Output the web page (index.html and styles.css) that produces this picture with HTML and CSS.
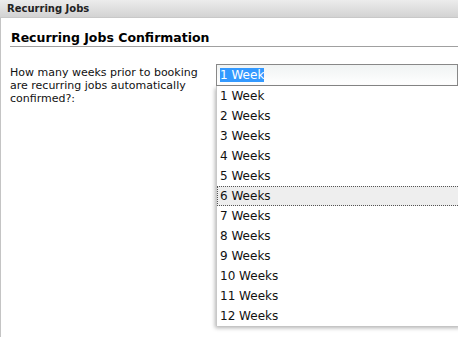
FILE: index.html
```
<!DOCTYPE html>
<html lang="en">
<head>
    <meta charset="UTF-8">
    <title>Recurring Jobs</title>
    <link rel="stylesheet" href="styles.css">
</head>
<body>
    <div class="panel-header">Recurring Jobs</div>
    <div class="panel-body">
        <h2 class="section-title">Recurring Jobs Confirmation</h2>
        <div class="form-row">
            <label class="field-label">How many weeks prior to booking are recurring jobs automatically confirmed?:</label>
            <div class="combo">
                <div class="combo-input"><span class="combo-selected">1 Week</span></div>
                <ul class="combo-list">
                    <li>1 Week</li>
                    <li>2 Weeks</li>
                    <li>3 Weeks</li>
                    <li>4 Weeks</li>
                    <li>5 Weeks</li>
                    <li class="hover">6 Weeks</li>
                    <li>7 Weeks</li>
                    <li>8 Weeks</li>
                    <li>9 Weeks</li>
                    <li>10 Weeks</li>
                    <li>11 Weeks</li>
                    <li>12 Weeks</li>
                </ul>
            </div>
        </div>
    </div>
</body>
</html>
```

FILE: styles.css
```
body {
    margin: 0;
    font-family: "DejaVu Sans", Verdana, sans-serif;
    background: white;
    overflow: hidden;
}
.panel-header {
    height: 18px;
    line-height: 18px;
    padding-left: 7px;
    font-size: 10px;
    font-weight: bold;
    color: #222;
    background: linear-gradient(#ececec, #d3d3d3);
    border-bottom: 1px solid #c8c8c8;
    box-sizing: border-box;
}
.panel-body {
    border-left: 1px solid #c4c4c4;
    height: 319px;
    padding: 0 0 0 9px;
}
.section-title {
    margin: 0;
    padding-top: 12px;
    height: 16px;
    font-size: 12.5px;
    font-weight: bold;
    color: #000;
    border-bottom: 1px solid #a0a0a0;
    line-height: 16px;
    padding-left: 1px;
}
.form-row {
    display: flex;
    margin-top: 17px;
}
.field-label {
    width: 206px;
    font-size: 11px;
    line-height: 13px;
    color: #111;
    padding-top: 2px;
}
.combo {
    position: relative;
    flex: 1;
}
.combo-input {
    height: 22px;
    box-sizing: border-box;
    border: 1px solid #888;
    background: linear-gradient(#f0f3f3, #fff);
    padding: 2px 0 0 3px;
    font-size: 12px;
    line-height: 16px;
}
.combo-selected {
    background: #3399ff;
    color: white;
}
.combo-list {
    position: absolute;
    top: 22px;
    left: 0;
    right: -4px;
    margin: 0;
    padding: 0;
    list-style: none;
    background: white;
    border-left: 1px solid #c8c8c8;
    box-shadow: -1px 2px 4px rgba(0, 0, 0, 0.3);
}
.combo-list li {
    height: 20px;
    line-height: 20px;
    padding-left: 3px;
    font-size: 12px;
    color: #111;
    box-sizing: border-box;
}
.combo-list li.hover {
    background: #eeeeee;
    border: 1px dotted #555;
    line-height: 18px;
    padding-left: 2px;
}
```
